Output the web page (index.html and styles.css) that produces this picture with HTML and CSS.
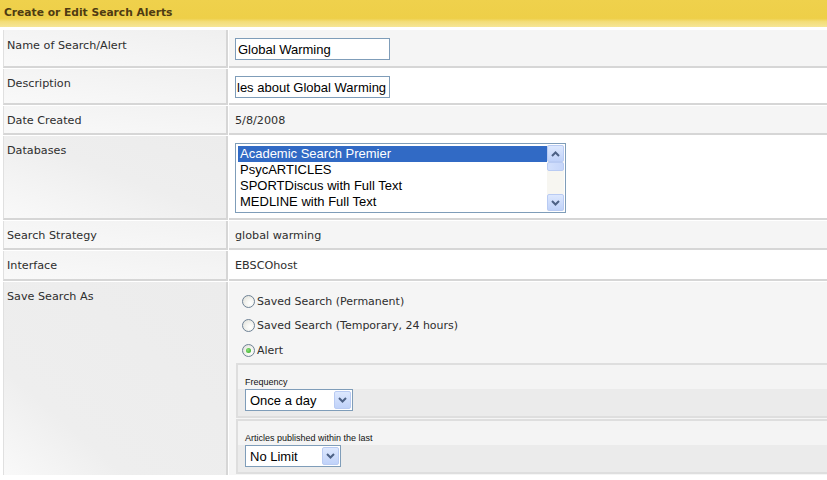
FILE: index.html
```html
<!DOCTYPE html>
<html>
<head>
<meta charset="utf-8">
<link rel="stylesheet" href="styles.css">
</head>
<body>
<div class="title">Create or Edit Search Alerts</div>
<div class="form">
  <div class="row r1">
    <div class="lbl">Name of Search/Alert</div>
    <div class="val odd"><input class="txt" type="text" value="Global Warming"></div>
  </div>
  <div class="row r2">
    <div class="lbl">Description</div>
    <div class="val even"><input class="txt desc" type="text" value="les about Global Warming"></div>
  </div>
  <div class="row">
    <div class="lbl">Date Created</div>
    <div class="val odd">5/8/2008</div>
  </div>
  <div class="row">
    <div class="lbl">Databases</div>
    <div class="val even">
      <div class="listbox">
        <div class="opts">
          <div class="opt sel">Academic Search Premier</div>
          <div class="opt">PsycARTICLES</div>
          <div class="opt">SPORTDiscus with Full Text</div>
          <div class="opt">MEDLINE with Full Text</div>
        </div>
        <div class="sbar">
          <div class="sbtn"><svg width="9" height="6" viewBox="0 0 9 6"><path d="M1 5 L4.5 1.5 L8 5" fill="none" stroke="#4d6185" stroke-width="2"/></svg></div>
          <div class="thumb"></div>
          <div class="track"></div>
          <div class="sbtn"><svg width="9" height="6" viewBox="0 0 9 6"><path d="M1 1 L4.5 4.5 L8 1" fill="none" stroke="#4d6185" stroke-width="2"/></svg></div>
        </div>
      </div>
    </div>
  </div>
  <div class="row">
    <div class="lbl">Search Strategy</div>
    <div class="val odd">global warming</div>
  </div>
  <div class="row r6">
    <div class="lbl">Interface</div>
    <div class="val even">EBSCOhost</div>
  </div>
  <div class="row last">
    <div class="lbl">Save Search As</div>
    <div class="val odd">
      <div class="radios">
        <label class="ropt"><span class="radio"></span>Saved Search (Permanent)</label>
        <label class="ropt"><span class="radio"></span>Saved Search (Temporary, 24 hours)</label>
        <label class="ropt"><span class="radio on"></span>Alert</label>
      </div>
      <div class="panel">
        <div class="sect">
          <div class="sl">Frequency</div>
          <div class="sd">
            <div class="dd w1"><span>Once a day</span><span class="ddbtn"><svg width="9" height="6" viewBox="0 0 9 6"><path d="M1 1 L4.5 4.5 L8 1" fill="none" stroke="#4d6185" stroke-width="2"/></svg></span></div>
          </div>
        </div>
        <div class="sect">
          <div class="sl">Articles published within the last</div>
          <div class="sd">
            <div class="dd w2"><span>No Limit</span><span class="ddbtn"><svg width="9" height="6" viewBox="0 0 9 6"><path d="M1 1 L4.5 4.5 L8 1" fill="none" stroke="#4d6185" stroke-width="2"/></svg></span></div>
          </div>
        </div>
      </div>
    </div>
  </div>
</div>
</body>
</html>
```
FILE: styles.css
```css
html, body {
  margin: 0;
  padding: 0;
  background: #ffffff;
  overflow: hidden;
}
body {
  width: 827px;
  height: 480px;
  font-family: "DejaVu Sans", Verdana, sans-serif;
  color: #333333;
}
.title {
  height: 27px;
  line-height: 25px;
  padding-left: 4px;
  font-size: 10.7px;
  font-weight: bold;
  color: #4e3b12;
  background: linear-gradient(to bottom, #efd14c 0, #eecf48 68%, #f3dd78 80%, #f6e596 100%);
}
.form {
  margin-top: 3px;
}
.row {
  display: flex;
  margin-bottom: 1px;
}
.lbl {
  box-sizing: border-box;
  width: 225px;
  margin-left: 3px;
  margin-right: 1px;
  border-left: 1px solid #e0e0e0;
  border-right: 2px solid #d6d6d6;
  border-bottom: 2px solid #d6d6d6;
  padding: 7px 3px 5px 3px;
  font-size: 11.2px;
  line-height: 15px;
  color: #2e2e2e;
  background: linear-gradient(to top right, #f9f9f9 0, #eeeeee 80px, #ececec 100%);
}
.val {
  flex: 1;
  border-bottom: 2px solid #d6d6d6;
  padding: 7px 6px 5px 6px;
  font-size: 11.2px;
  line-height: 15px;
  color: #2e2e2e;
}
.r1 .lbl, .r1 .val {
  padding-top: 8px;
  padding-bottom: 6px;
}
.r6 .lbl, .r6 .val {
  padding-bottom: 6px;
}
.last .lbl, .last .val {
  border-bottom: none;
  padding-bottom: 0;
}
.last .val {
  padding-right: 0;
}
.odd { background: #f5f5f5; }
.even { background: #ffffff; }
.txt {
  display: block;
  box-sizing: border-box;
  width: 155px;
  height: 22px;
  margin: 0;
  border: 1px solid #7f9db9;
  padding: 0 2px;
  font-family: "Liberation Sans", Arial, sans-serif;
  font-size: 13px;
  color: #000;
  background: #fff;
  outline: none;
}
.desc { padding-left: 1px; padding-right: 0; }
.listbox {
  box-sizing: border-box;
  width: 331px;
  height: 70px;
  border: 1px solid #7f9db9;
  background: #fff;
  display: flex;
  padding: 1px;
}
.opts {
  flex: 1;
  padding: 1px 0 0 1px;
  font-family: "Liberation Sans", Arial, sans-serif;
  font-size: 13px;
  color: #000;
}
.opt {
  height: 16px;
  line-height: 16px;
  padding-left: 2px;
  white-space: nowrap;
}
.opt.sel {
  background: #316ac5;
  color: #fff;
}
.sbar {
  width: 17px;
  display: flex;
  flex-direction: column;
  background: #f7f6f1;
}
.sbtn {
  box-sizing: border-box;
  height: 17px;
  border: 1px solid #b9cbf3;
  border-radius: 2px;
  background: linear-gradient(to bottom, #dde8fe, #c0d2f9);
  display: flex;
  align-items: center;
  justify-content: center;
}
.thumb {
  box-sizing: border-box;
  height: 9px;
  border: 1px solid #b9cbf3;
  border-radius: 2px;
  background: linear-gradient(to right, #d3e0fc, #c6d6fa);
}
.track { flex: 1; }
.radios {
  padding-left: 7px;
}
.ropt {
  display: flex;
  align-items: center;
  height: 24px;
  font-size: 11px;
}
.ropt:nth-child(2) { height: 25px; }
.radio {
  box-sizing: border-box;
  width: 13px;
  height: 13px;
  border: 1px solid #6e8296;
  border-radius: 50%;
  background: radial-gradient(circle at 65% 65%, #ffffff 0, #f4f4f0 40%, #dcdcd4 100%);
  margin-right: 2px;
  display: flex;
  align-items: center;
  justify-content: center;
}
.radio.on::after {
  content: "";
  width: 5px;
  height: 5px;
  border-radius: 50%;
  background: radial-gradient(circle at 40% 40%, #8ee27a, #26a21a);
}
.panel {
  margin-top: 1px;
  margin-left: 1px;
}
.sect {
  border-top: 2px solid #dedede;
  border-left: 2px solid #dedede;
  border-bottom: 2px solid #dedede;
  margin-bottom: 1px;
}
.sl {
  height: 14px;
  padding: 11px 0 0 7px;
  background: #f4f4f4;
  font-family: "Liberation Sans", Arial, sans-serif;
  font-size: 9px;
  line-height: 12px;
  color: #111;
}
.sd {
  height: 27px;
  padding-left: 7px;
  background: #ebebeb;
}
.dd {
  box-sizing: border-box;
  height: 22px;
  margin-top: -1px;
  border: 1px solid #7f9db9;
  background: #fff;
  display: flex;
  align-items: center;
  justify-content: space-between;
  padding: 0 1px 0 4px;
  font-family: "Liberation Sans", Arial, sans-serif;
  font-size: 13px;
  color: #000;
}
.w1 { width: 108px; }
.w2 { width: 96px; }
.ddbtn {
  box-sizing: border-box;
  width: 17px;
  height: 18px;
  border: 1px solid #b9cbf3;
  border-radius: 2px;
  background: linear-gradient(to bottom, #dde8fe, #c0d2f9);
  display: flex;
  align-items: center;
  justify-content: center;
}
```
